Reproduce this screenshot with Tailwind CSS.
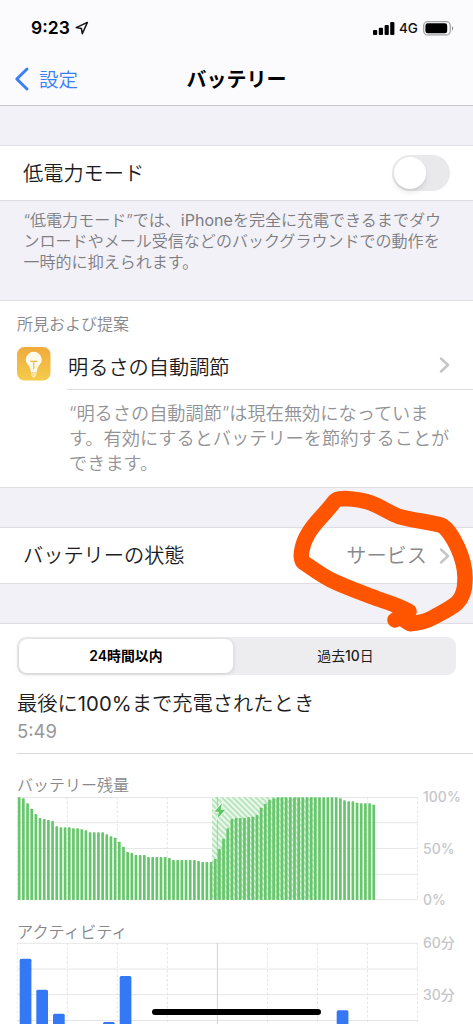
<!DOCTYPE html>
<html lang="ja">
<head>
<meta charset="utf-8">
<title>バッテリー</title>
<script src="https://cdn.jsdelivr.net/npm/@tailwindcss/browser@4"></script>
</head>
<body class="bg-white">
<div class="relative flex h-[1024px] w-[473px] flex-col overflow-hidden bg-white font-['Inter','Noto_Sans_CJK_JP',sans-serif] font-[350] text-[#1c1c1e] whitespace-nowrap">

  <header class="flex h-[106px] shrink-0 flex-col border-b border-[#c8c8cc] bg-[#fbfbfd]">
    <div class="flex h-[52px] items-end justify-between pr-[19px] pl-[31px]">
      <div class="flex h-[48px] items-center gap-[5px] text-black">
        <span class="text-[17.5px] leading-[20px] font-semibold">9:23</span>
        <svg class="size-[14px]" viewBox="0 0 14 14" fill="none" stroke="#111" stroke-width="1.5" stroke-linejoin="round"><path d="M12.4 1.400 1.200 6.600l5.200.9.900 5.200z"/></svg>
      </div>
      <div class="flex h-[48px] items-center text-[#111]">
        <svg class="h-[13px] w-[22px]" viewBox="0 0 22 13" fill="#000"><rect x="0" y="8" width="4.2" height="5" rx="1"/><rect x="5.8" y="5.8" width="4.2" height="7.2" rx="1"/><rect x="11.6" y="3" width="4.2" height="10" rx="1"/><rect x="17.2" y="0" width="4.2" height="13" rx="1"/></svg>
        <span class="ml-[4px] w-[20px] text-[13.5px] leading-[20px] font-medium">4G</span>
        <svg class="ml-[4px] h-[15px] w-[31px]" viewBox="0 0 31 15"><rect x=".7" y=".7" width="26.6" height="13.2" rx="4" fill="none" stroke="#a4a4a6" stroke-width="1.3"/><rect x="2.4" y="2.3" width="21.8" height="10" rx="2.4" fill="#000"/><path d="M29 5.2c1.6.6 1.6 3.8 0 4.4z" fill="#8e8e90"/></svg>
      </div>
    </div>
    <div class="grid h-[53px] grid-cols-3 items-center">
      <div class="flex items-center gap-[9px] pl-[14px] text-[#3b7ff5]">
        <svg class="h-[26px] w-[16px]" viewBox="0 0 16 26" fill="none" stroke="currentColor" stroke-width="3" stroke-linecap="round" stroke-linejoin="round"><path d="M13 3 2.800 13 13 23"/></svg>
        <span class="pt-[2px] text-[19.5px] leading-[28px]">設定</span>
      </div>
      <h1 class="pt-[2px] text-center text-[20px] leading-[28px] font-bold text-black">バッテリー</h1>
    </div>
  </header>

  <div class="h-[39px] shrink-0 bg-[#f2f1f7]"></div>
  <section class="flex h-[56px] shrink-0 items-center justify-between border-y border-[#dedee2] pr-[23px] pl-[23px]">
    <span class="pt-[2px] text-[20.2px] leading-[28px]">低電力モード</span>
    <span class="flex h-[36px] w-[58px] items-center rounded-full bg-[#e9e9eb] p-[2px]"><span class="size-[32px] rounded-full bg-white shadow-md"></span></span>
  </section>
  <div class="h-[99px] shrink-0 bg-[#f2f1f7] pt-[9px] pl-[23.5px] text-[16.050px] leading-[21px] text-[#7c7c81]">“低電力モード”では、<span class="font-normal">iPhone</span>を完全に充電できるまでダウ<br>ンロードやメール受信などのバックグラウンドでの動作を<br>一時的に抑えられます。</div>

  <section class="flex h-[188px] shrink-0 flex-col border-y border-[#dedee2] pl-[17px]">
    <h2 class="mt-[11px] text-[16px] leading-[24px] text-[#88888c]">所見および提案</h2>
    <div class="mt-[11px] flex h-[43px]">
      <svg class="size-[34px] shrink-0" viewBox="0 0 34 34"><defs><linearGradient id="amber" x2="0" y2="1"><stop stop-color="#f0aa3c"/><stop offset="1" stop-color="#f5cb4b"/></linearGradient></defs><rect width="33.5" height="33.5" rx="7.5" fill="url(#amber)"/><path d="M16.800 4.800a8 8 0 0 0-8 8c0 3.800 3.400 5.200 4.500 9l.7 4h5.600l.7-4c1.100-3.800 4.500-5.200 4.500-9a8 8 0 0 0-8-8z" fill="#fffbed"/><path d="M13.300 14.300h7M16.800 14.300v8" stroke="#efb746" stroke-width="1.200" fill="none"/><path d="M14.300 25.800h5v3l-2.500 2-2.500-2z" fill="#fff0bf"/><path d="M14.300 25.800h5M14.300 28h5" stroke="#efc24b" stroke-width=".6"/></svg>
      <div class="ml-[16px] flex flex-1 items-center justify-between border-b border-[#dedee2] pr-[23px]">
        <span class="pl-[1px] text-[20.200px] leading-[28px]">明るさの自動調節</span>
        <svg class="mb-[7px] h-[16px] w-[11px]" viewBox="0 0 11 16" fill="none" stroke="#c5c5c8" stroke-width="2.400" stroke-linecap="round" stroke-linejoin="round"><path d="m2 1.500 7 6.500-7 6.500"/></svg>
      </div>
    </div>
    <p class="mt-[11px] ml-[52px] text-[18.200px] leading-[25.200px] text-[#929296]">“明るさの自動調節”は現在無効になっていま<br>す。有効にするとバッテリーを節約することが<br>できます。</p>
  </section>

  <div class="h-[39px] shrink-0 bg-[#f2f1f7]"></div>
  <section class="flex h-[57px] shrink-0 items-center justify-between border-y border-[#dedee2] pr-[23px] pl-[23px]">
    <span class="text-[20.200px] leading-[28px]">バッテリーの状態</span>
    <span class="flex items-center gap-[12px] text-[20.200px] leading-[28px] text-[#88888c]">サービス
      <svg class="h-[16px] w-[11px]" viewBox="0 0 11 16" fill="none" stroke="#c5c5c8" stroke-width="2.400" stroke-linecap="round" stroke-linejoin="round"><path d="m2 1.500 7 6.500-7 6.500"/></svg>
    </span>
  </section>
  <div class="h-[40px] shrink-0 border-b border-[#dedee2] bg-[#f2f1f7]"></div>

  <main class="flex flex-1 flex-col pl-[17px]">
    <div class="mt-[13px] grid h-[38px] w-[439px] shrink-0 grid-cols-[214px_1fr] rounded-[9px] bg-[#ededef] p-[2px] text-center text-[13.900px] leading-[34px]">
      <div class="rounded-[8px] bg-white font-semibold text-black shadow-[0_1px_5px_rgba(0,0,0,0.14)]">24時間以内</div>
      <div class="pl-[4px]"><span class="font-normal">過去</span><span class="font-medium">10</span><span class="font-normal">日</span></div>
    </div>
    <div class="flex h-[79px] shrink-0 flex-col border-b border-[#d9d9dd] pt-[16px]">
      <div class="text-[20.300px] leading-[26px]">最後に<span class="font-normal">100%</span>まで充電されたとき</div>
      <div class="mt-[2px] text-[18.500px] leading-[24px] font-normal text-[#98989c]">5:49</div>
    </div>
    <h2 class="mt-[19px] text-[16px] leading-[24px] text-[#88888c]">バッテリー残量</h2>
    <div class="-mt-px flex h-[107px] shrink-0 gap-[5px]">
      <svg id="level" class="h-[107px] w-[401px]" viewBox="17 796 401 107"></svg>
      <div class="-mt-[8px] flex h-[121px] flex-col justify-between text-[14px] leading-[18px] font-medium text-[#c6c6c9]"><span>100%</span><span>50%</span><span>0%</span></div>
    </div>
    <h2 class="mt-[17px] text-[16.200px] leading-[24px] text-[#88888c]">アクティビティ</h2>
    <div class="-mt-[2px] flex h-[83px] shrink-0 gap-[5px]">
      <svg id="activity" class="h-[83px] w-[401px]" viewBox="17 942 401 83"></svg>
      <div class="-mt-[8px] flex flex-col gap-[34px] text-[14px] leading-[18px] font-medium text-[#c6c6c9]"><span>60分</span><span>30分</span></div>
    </div>
  </main>

  <div class="absolute top-[1009px] left-[152px] h-[6px] w-[169px] rounded-full bg-black"></div>
  <svg class="absolute inset-0 h-[1024px] w-[473px]" viewBox="0 0 473 1024" fill="none" stroke="#ff5500" stroke-width="15.500" stroke-linecap="round" stroke-linejoin="round"><path d="M395 620 409 611.500Q402 607 376.700 598.500C360 592 345 587 330 579.500C318 573 312 568 303.500 562.500C299 558 302 544 308 534C314 523 323 516 332 504.500C336 499 338 498.500 345 498.500C355 499 362 499.500 371 503C384 508 388 512.500 399 516.500C413 520.500 428 521.500 442 525.500C449 530 453 538 457.500 547C462 557 465.500 569 465 580C465 590 463 597 457 603C450 609 441 613 433 617.500C426 621.500 419 623 410 623.700L404 620"/></svg>
</div>

<script>
const grid = (top, bottom, rows) => {
  let s = '';
  for (const y of rows) s += `<path d="M17 ${y}H418" stroke="#e6e6e8"/>`;
  for (let i = 0; i <= 8; i++) {
    const x = 17.2 + i * 50.05;
    s += i === 4
      ? `<path d="M${x} ${top}V${bottom}" stroke="#cfcfd2"/>`
      : `<path d="M${x} ${top}V${bottom}" stroke="#e4e4e7" stroke-dasharray="2.500 2"/>`;
  }
  return s;
};
// Charge level, as bar tops in thirds of a pixel below the chart's origin
const tops = [97,100,115,131,147,159,162,165,168,184,187,187,187,190,190,193,196,202,202,202,202,208,214,218,230,245,261,264,270,270,270,276,276,276,276,276,279,285,285,285,285,285,285,288,291,291,291,282,251,221,190,162,159,159,158,156,155,150,128,116,105,100,97,97,97,97,97,97,97,97,97,97,97,97,97,97,97,100,106,109,109,113,115,115,115,119];
let level = '<defs><pattern id="hatch" width="4" height="4" patternUnits="userSpaceOnUse" patternTransform="rotate(-45)"><rect width="4" height="4" fill="#ecf8ed"/><rect width="2" height="4" fill="#b9e5bd"/></pattern></defs>';
level += grid(797, 900, [797.5, 822.700, 848.500, 874.300, 899.700]);
level += '<rect x="212" y="797" width="104.500" height="103" fill="url(#hatch)"/><path d="M217.400 797V900" stroke="#8fb893" stroke-opacity=".6"/>';
tops.forEach((t, i) => {
  const y = 765 + t / 3;
  level += `<rect x="${17.85 + i * 4.171}" y="${y}" width="2.700" height="${900 - y}" rx=".7" fill="#66c66b"/>`;
});
level += '<path d="M221.800 803.500 214.500 811.800H219L217.500 818.300 225.200 809.800H220.600z" fill="#5cc763" stroke="#e6f7e8" stroke-width="2" paint-order="stroke"/>';
document.getElementById('level').innerHTML = level;

let act = grid(943, 1024, [943.300, 969, 994.700, 1020.500]);
for (const [x, y] of [[19.7, 958.7], [36.3, 989.7], [53, 1013.7], [103, 1022], [119.7, 976], [336.7, 1010.3]])
  act += `<rect x="${x}" y="${y}" width="11.700" height="80" rx="1.500" fill="#3478f6"/>`;
document.getElementById('activity').innerHTML = act;
</script>
</body>
</html>
